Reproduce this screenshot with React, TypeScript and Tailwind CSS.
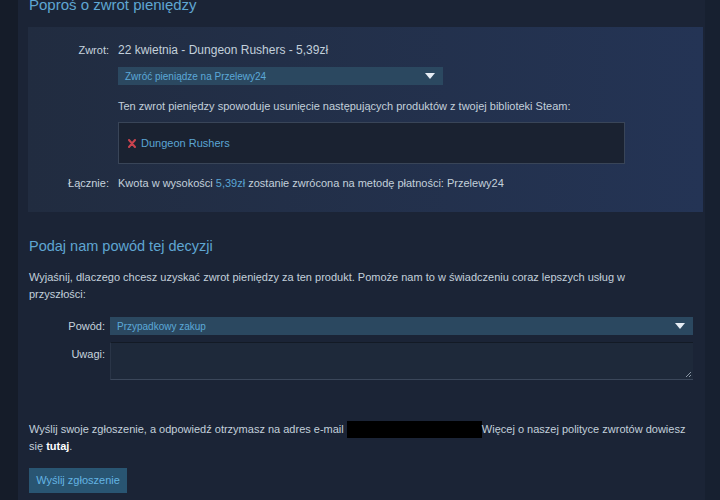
import React from 'react';

const Caret: React.FC = () => (
  <svg width="10" height="6" viewBox="0 0 10 6" className="shrink-0">
    <path d="M0 0 L10 0 L5 6 Z" fill="#e6eef5" />
  </svg>
);

const App: React.FC = () => {
  return (
    <div
      className="w-[720px] h-[500px] overflow-hidden flex bg-[#1b2436] text-[11px] text-[#c3d0db]"
      style={{ fontFamily: '"Liberation Sans", Arial, sans-serif' }}
    >
      {/* darker side strip */}
      <div className="w-[18px] shrink-0 bg-[#151c29]" />

      <div className="flex-1 flex flex-col">
        <h1 className="-mt-[5px] ml-[11px] h-[20px] leading-[20px] text-[15px] text-[#5fa6d2]">
          Poproś o zwrot pieniędzy
        </h1>

        {/* refund summary panel */}
        <div className="mt-[12px] ml-[10px] w-[675px] h-[185px] pt-[15px] bg-[linear-gradient(to_right,#212c40,#243455)] flex flex-col">
          <div className="flex leading-[16px]">
            <div className="w-[81px] text-right text-[#c6d3de]">Zwrot:</div>
            <div className="ml-[9px] text-[12px]">22 kwietnia - Dungeon Rushers - 5,39zł</div>
          </div>

          <div className="ml-[90px] mt-[9px] w-[325px] h-[18px] bg-[#2b4860] flex items-center justify-between pl-[7px] pr-[8px]">
            <span className="text-[10px] text-[#5ba8d8]">Zwróć pieniądze na Przelewy24</span>
            <Caret />
          </div>

          <div className="ml-[90px] mt-[13px] leading-[16px]">
            Ten zwrot pieniędzy spowoduje usunięcie następujących produktów z twojej biblioteki Steam:
          </div>

          <div className="ml-[90px] mt-[8px] w-[507px] h-[42px] bg-[#1a2231] border border-[#394558] flex items-center pl-[9px]">
            <svg width="8" height="9" viewBox="0 0 8 9" className="mr-[5px]">
              <path d="M1 1 L7 8 M7 1 L1 8" stroke="#c8434e" strokeWidth="2" strokeLinecap="round" />
            </svg>
            <span className="text-[#5aa5d4]">Dungeon Rushers</span>
          </div>

          <div className="flex leading-[16px] mt-[11px]">
            <div className="w-[81px] text-right text-[#c6d3de]">Łącznie:</div>
            <div className="ml-[9px]">
              Kwota w wysokości <span className="text-[#5aa5d4]">5,39zł</span> zostanie zwrócona na metodę płatności: Przelewy24
            </div>
          </div>
        </div>

        {/* reason section */}
        <h2 className="mt-[24px] ml-[11px] leading-[20px] text-[14.5px] text-[#5fa6d2]">
          Podaj nam powód tej decyzji
        </h2>

        <p className="ml-[11px] mt-[13px] w-[605px] leading-[17px]">
          Wyjaśnij, dlaczego chcesz uzyskać zwrot pieniędzy za ten produkt. Pomoże nam to w świadczeniu coraz lepszych usług w przyszłości:
        </p>

        <div className="ml-[11px] mt-[14px] flex items-center">
          <div className="w-[76px] text-right text-[#c6d3de]">Powód:</div>
          <div className="ml-[5px] w-[583px] h-[18px] bg-[#2b4860] flex items-center justify-between pl-[7px] pr-[8px]">
            <span className="text-[10px] text-[#5ba8d8]">Przypadkowy zakup</span>
            <Caret />
          </div>
        </div>

        <div className="ml-[11px] mt-[7px] flex">
          <div className="w-[76px] text-right text-[#c6d3de] pt-[4px]">Uwagi:</div>
          <div className="ml-[5px] w-[583px] h-[38px] bg-[#1e293a] border-t border-t-[#131a25] border-b border-b-[#3b475a] border-l border-l-[#2a3547] relative">
            <svg width="7" height="7" viewBox="0 0 7 7" className="absolute right-[1px] bottom-[1px]">
              <path d="M1 6 L6 1 M4 6 L6 4" stroke="#8b97a5" strokeWidth="1" />
            </svg>
          </div>
        </div>

        <p className="ml-[11px] mt-[41px] w-[660px] leading-[17px]">
          Wyślij swoje zgłoszenie, a odpowiedź otrzymasz na adres e-mail{' '}
          <span className="inline-block w-[135px] h-[17px] bg-black align-top" />
          Więcej o naszej polityce zwrotów dowiesz się <span className="font-bold text-white">tutaj</span>.
        </p>

        <button className="ml-[11px] mt-[13px] w-[98px] h-[25px] bg-[#295572] text-[#64b4e3] text-[11px] flex items-center justify-center">
          Wyślij zgłoszenie
        </button>
      </div>

      <div className="w-[15px] shrink-0 bg-[#172030]" />
    </div>
  );
};

export default App;
